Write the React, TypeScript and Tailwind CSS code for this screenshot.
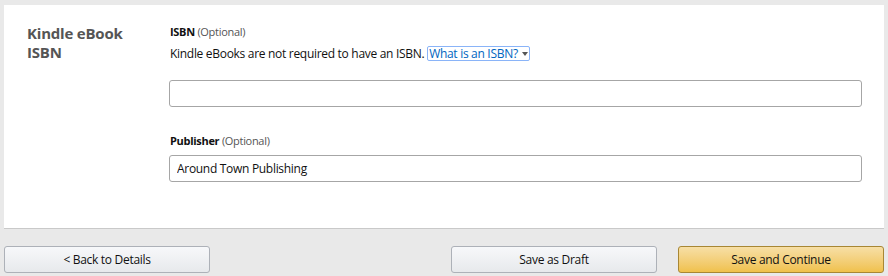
import { useState } from 'react';

export default function App() {
  const [isbn, setIsbn] = useState('');
  const [publisher, setPublisher] = useState('Around Town Publishing');

  return (
    <div className="w-[888px] h-[276px] bg-[#e9e9e9] px-[4px] pt-[5px] font-['Open_Sans',sans-serif] text-[#111] tracking-[-0.3px]">
      <div className="bg-white border-b border-[#c9c9c9] h-[224px] flex">
        <div className="w-[165px] pl-[23px] pt-[19px]">
          <h2 className="text-[15px] leading-[19px] font-bold text-[#555] tracking-[-0.2px]">
            Kindle eBook
            <br />
            ISBN
          </h2>
        </div>
        <div className="flex-1 pr-[22px] pt-[19px]">
          <div className="text-[11px] leading-[16px] pl-px">
            <span className="font-bold">ISBN</span>{' '}
            <span className="text-[#555]">(Optional)</span>
          </div>
          <p className="mt-[6px] text-[12px] leading-[16px] pl-px">
            Kindle eBooks are not required to have an ISBN.{' '}
            <a
              href="#"
              className="inline-flex items-center gap-[4px] text-[#0066c0] border border-[#8ab4f8] rounded-[2px] px-px leading-[13px]"
            >
              What is an ISBN?
              <span className="inline-block w-0 h-0 border-l-[3px] border-r-[3px] border-t-[4px] border-l-transparent border-r-transparent border-t-[#555]" />
            </a>
          </p>
          <input
            value={isbn}
            onChange={(e) => setIsbn(e.target.value)}
            className="mt-[18px] block w-full h-[27px] border border-[#a6a6a6] rounded-[3px] px-[7px] text-[12px] outline-none"
          />
          <div className="mt-[26px] text-[11px] leading-[16px] pl-px">
            <span className="font-bold">Publisher</span>{' '}
            <span className="text-[#555]">(Optional)</span>
          </div>
          <input
            value={publisher}
            onChange={(e) => setPublisher(e.target.value)}
            className="mt-[6px] block w-full h-[27px] border border-[#a6a6a6] rounded-[3px] px-[7px] text-[12px] text-[#111] tracking-[-0.3px] outline-none"
          />
        </div>
      </div>
      <div className="flex pt-[17px]">
        <button className="w-[206px] h-[27px] rounded-[3px] border border-[#adb1b8] bg-gradient-to-b from-[#f7f8fa] to-[#e7e9ec] text-[12px] text-[#111]">
          &lt; Back to Details
        </button>
        <div className="flex-1" />
        <button className="w-[206px] h-[27px] rounded-[3px] border border-[#adb1b8] bg-gradient-to-b from-[#f7f8fa] to-[#e7e9ec] text-[12px] text-[#111]">
          Save as Draft
        </button>
        <button className="ml-[21px] w-[206px] h-[27px] rounded-[3px] border border-[#a88734] bg-gradient-to-b from-[#f7dfa5] to-[#f0c14b] text-[12px] text-[#111]">
          Save and Continue
        </button>
      </div>
    </div>
  );
}
